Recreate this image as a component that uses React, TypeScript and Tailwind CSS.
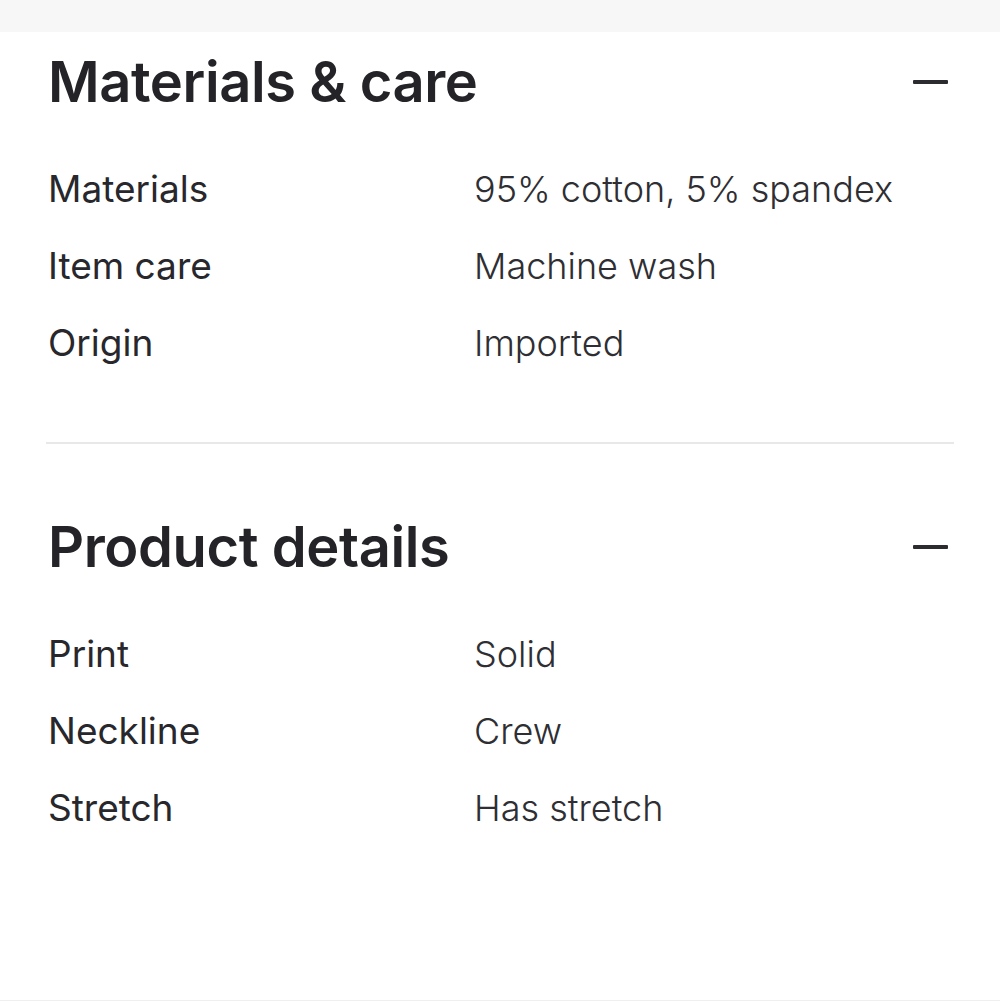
const font = { fontFamily: '"Inter", "Noto Sans", sans-serif' };

type Row = { label: string; value: string };

const sections: { title: string; rows: Row[] }[] = [
  {
    title: "Materials & care",
    rows: [
      { label: "Materials", value: "95% cotton, 5% spandex" },
      { label: "Item care", value: "Machine wash" },
      { label: "Origin", value: "Imported" },
    ],
  },
  {
    title: "Product details",
    rows: [
      { label: "Print", value: "Solid" },
      { label: "Neckline", value: "Crew" },
      { label: "Stretch", value: "Has stretch" },
    ],
  },
];

function Section({ title, rows }: { title: string; rows: Row[] }) {
  return (
    <div>
      <div className="flex items-center justify-between h-[64px]">
        <h2 className="text-[56px] leading-[64px] font-semibold tracking-[-0.4px] text-[#232328] pl-[2px]">
          {title}
        </h2>
        <button aria-label="Collapse" className="mr-[6px] w-[35px] h-[4px] rounded-[1px] bg-[#2b2b30]" />
      </div>
      <div className="mt-[36px]">
        {rows.map((r) => (
          <div key={r.label} className="flex h-[77px] items-center text-[36px] text-[#27272c]">
            <div className="w-[428px] pl-[2px] text-[37px] font-normal">{r.label}</div>
            <div className="font-light text-[#2e2e33]">{r.value}</div>
          </div>
        ))}
      </div>
    </div>
  );
}

export default function App() {
  return (
    <div className="w-[1000px] h-[1001px] bg-white flex flex-col" style={font}>
      <div className="h-[32px] bg-[#f7f7f7]" />
      <div className="flex-1 px-[46px]">
        <div className="pt-[18px]">
          <Section {...sections[0]} />
        </div>
        <div className="mt-[61px] h-[2px] bg-[#e8e8e8]" />
        <div className="mt-[71px]">
          <Section {...sections[1]} />
        </div>
      </div>
      <div className="h-[1px] bg-[#efefef]" />
    </div>
  );
}
